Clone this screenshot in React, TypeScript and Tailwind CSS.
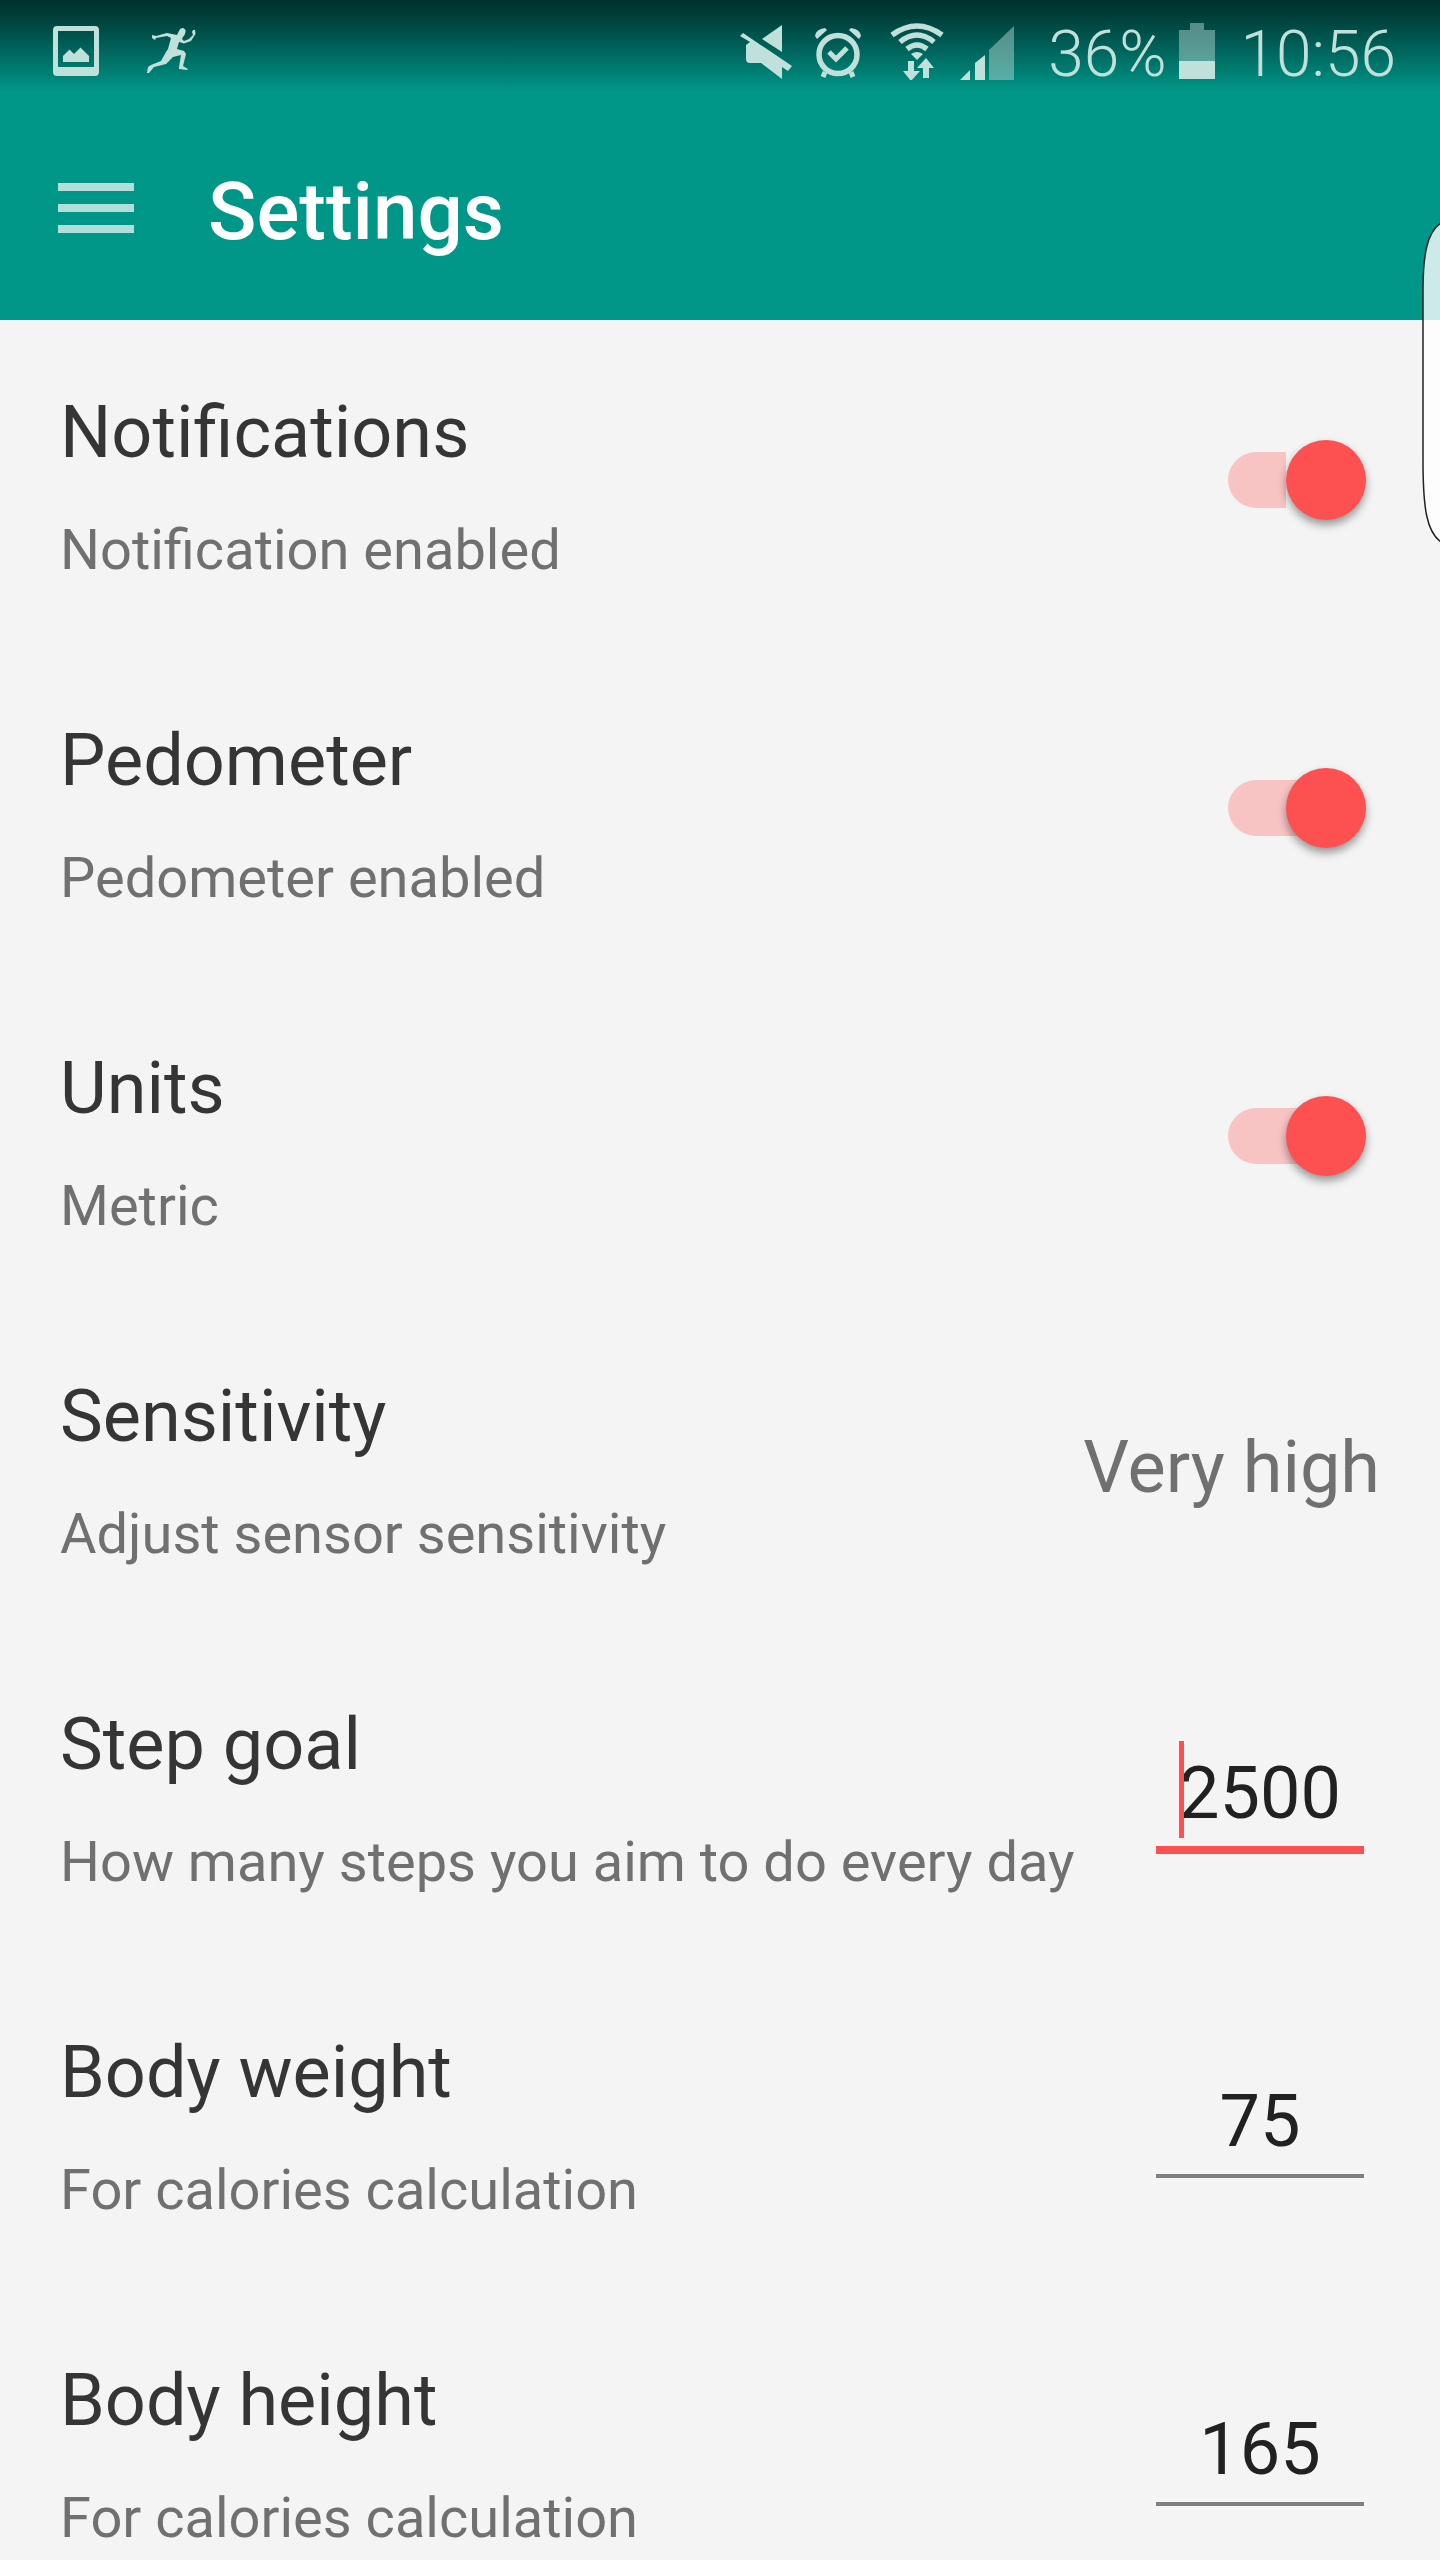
import { useState } from "react";

interface SettingRowProps {
  id: string;
  title: string;
  summary: string;
  children: React.ReactNode;
}

function SettingRow({ id, title, summary, children }: SettingRowProps) {
  return (
    <div className="flex min-h-[320px] items-center justify-between px-[60px]">
      <div className="pt-px">
        <label htmlFor={id} className="block text-[72px] leading-[114px] text-[#353535]">
          {title}
        </label>
        <p id={`${id}-summary`} className="mt-[25px] text-[56px] leading-[70px] whitespace-nowrap text-[#707070]">
          {summary}
        </p>
      </div>
      {children}
    </div>
  );
}

interface ToggleProps {
  id: string;
  shortTrack?: boolean;
}

function Toggle({ id, shortTrack }: ToggleProps) {
  const [on, setOn] = useState(true);

  return (
    <span className="relative mr-3.5 flex h-20 w-[138px] items-center">
      <input
        id={id}
        type="checkbox"
        role="switch"
        checked={on}
        onChange={(e) => setOn(e.target.checked)}
        aria-describedby={`${id}-summary`}
        className={
          shortTrack
            ? "peer h-14 w-[58px] appearance-none rounded-l-full bg-[#d0d0d0] checked:bg-[#f7c3c3]"
            : "peer h-14 w-full appearance-none rounded-full bg-[#d0d0d0] checked:bg-[#f7c3c3]"
        }
      />
      <span className="pointer-events-none absolute top-0 left-0 size-20 rounded-full bg-[#fafafa] shadow-[0_5px_9px_rgba(0,0,0,0.38)] peer-checked:right-0 peer-checked:left-auto peer-checked:bg-[#fd5050]" />
    </span>
  );
}

interface NumberFieldProps {
  id: string;
  initial: string;
  active?: boolean;
}

function NumberField({ id, initial, active }: NumberFieldProps) {
  const [value, setValue] = useState(initial);

  return (
    <span className="relative mr-4 flex w-[208px] shrink-0 flex-col pt-1.5">
      <input
        id={id}
        type="text"
        inputMode="numeric"
        value={value}
        onChange={(e) => setValue(e.target.value)}
        aria-describedby={`${id}-summary`}
        className="h-[116px] w-full bg-transparent text-center text-[72px] leading-[84px] text-[#212121] caret-[#fd5050] outline-none"
      />
      {active ? (
        <>
          <span className="absolute top-3 left-[23px] h-[97px] w-[5px] bg-[#fd5050]" />
          <span className="-mt-[5px] mb-px h-2 bg-[#fd5050]" />
        </>
      ) : (
        <span className="-mt-[5px] mb-[5px] h-1 bg-[#808080]" />
      )}
    </span>
  );
}

function StatusBar() {
  return (
    <div className="flex h-24 items-center justify-between bg-linear-to-b from-[#00332f] from-5% to-[#009688] to-95% pt-1.5 pr-11 pl-[52px] text-[#c0e0dc]">
      <div className="flex items-center gap-[46px]">
        <svg className="h-[52px] w-[48px]" viewBox="0 0 48 52" fill="currentColor">
          <path fillRule="evenodd" d="M5 1H43Q47 1 47 5V47Q47 51 43 51H5Q1 51 1 47V5Q1 1 5 1ZM6 6V42H42V6Z" />
          <path d="M11 37V31L17.500 24.500L22 29L28.500 22.500L37 31V37Z" />
        </svg>
        <svg className="h-[48px] w-[52px]" viewBox="0 0 52 48" fill="currentColor">
          <path d="M33 4Q34 1 37 1Q40 2 39.500 5Q39 8 37 10L36 12L38 14L43 12L47 8L46 5Q47 2 49 3L49.500 7L45 14L38 16.500L33 15L31 22L38 24L40 27L37 39L42 42L41 43L33 42V40L35 28L27 30L20 37L8 40L3 46L1 46L2 40L5 38L15 34L20 25L22 22L25 11L21 9L10 11L9 13L6 11L6 8L10 9L21 6L31 8Z" />
        </svg>
      </div>
      <div className="flex items-center">
        <svg className="h-[58px] w-[274px]" viewBox="0 0 274 58" fill="currentColor">
          <path d="M42 3V30L22 17Z" />
          <path d="M3 11L52 44L48 49L42 45V57L21 41H10Q6 41 6 37V23L10 20L0 14Z" />
          <g fill="none" stroke="currentColor" strokeWidth="5.500">
            <circle cx="98" cy="32.500" r="19" />
            <path d="M89 30L96 37L107 26" strokeWidth="5" />
            <path d="M85 50L83 55M111 50L113 55" strokeWidth="5" />
            <path d="M152 13Q177-5 202 13" />
            <path d="M160 20Q177 6 194 20" />
            <path d="M167 27Q177 19 187 27" />
          </g>
          <path d="M75 14Q76 7 85 6L87 8L77 17ZM121 14Q120 7 111 6L109 8L119 17Z" />
          <path d="M171 32Q177 28 183 32L177 38Z" />
          <path d="M168 39H174V49H180L171 59L163 49H168ZM183 56V46H177L186 36L194 46H189V56Z" />
          <path d="M220 58L230 48V58ZM235 58V41L245 33V58Z" />
          <path d="M249 58V28L274 4V58Z" opacity=".45" />
        </svg>
        <span className="ml-[34px] pt-2 text-[64px] leading-[76px] font-[360]">36%</span>
        <svg className="ml-3 h-[56px] w-[36px]" viewBox="0 0 36 56" fill="currentColor">
          <path d="M11 0H25V7H36V38H0V7H11Z" opacity=".45" />
          <path d="M0 38H36V56H0Z" />
        </svg>
        <span className="ml-[26px] pt-2 text-[64px] leading-[76px] font-[360]">10:56</span>
      </div>
    </div>
  );
}

export default function App() {
  return (
    <div className="relative min-h-screen overflow-x-hidden bg-[#f4f4f4] font-[Roboto,sans-serif]">
      <header className="bg-[#009688]">
        <StatusBar />
        <div className="flex h-56 items-center gap-[74px] px-[58px]">
          <button type="button" aria-label="Open menu" className="flex w-[76px] flex-col gap-[13px]">
            <span className="h-2 bg-[#b2dfdb]" />
            <span className="h-2 bg-[#b2dfdb]" />
            <span className="h-2 bg-[#b2dfdb]" />
          </button>
          <h1 className="pt-2 text-[80px] leading-[94px] font-medium text-white">Settings</h1>
        </div>
      </header>

      <main className="flex flex-col gap-2">
        <SettingRow id="notifications" title="Notifications" summary="Notification enabled">
          <Toggle id="notifications" shortTrack />
        </SettingRow>
        <SettingRow id="pedometer" title="Pedometer" summary="Pedometer enabled">
          <Toggle id="pedometer" />
        </SettingRow>
        <SettingRow id="units" title="Units" summary="Metric">
          <Toggle id="units" />
        </SettingRow>
        <SettingRow id="sensitivity" title="Sensitivity" summary="Adjust sensor sensitivity">
          <select
            id="sensitivity"
            defaultValue="Very high"
            aria-describedby="sensitivity-summary"
            className="appearance-none bg-transparent pt-2 text-right text-[72px] leading-[84px] text-[#707070]"
          >
            <option>Low</option>
            <option>Medium</option>
            <option>High</option>
            <option>Very high</option>
          </select>
        </SettingRow>
        <SettingRow id="step-goal" title="Step goal" summary="How many steps you aim to do every day">
          <NumberField id="step-goal" initial="2500" active />
        </SettingRow>
        <SettingRow id="weight" title="Body weight" summary="For calories calculation">
          <NumberField id="weight" initial="75" />
        </SettingRow>
        <SettingRow id="height" title="Body height" summary="For calories calculation">
          <NumberField id="height" initial="165" />
        </SettingRow>
      </main>

      {/* edge panel handle */}
      <svg className="absolute top-[220px] right-0 h-[324px] w-[18px]" viewBox="0 0 18 324">
        <path
          d="M19 3C5 12 1 35 1 70V240C1 290 5 312 19 322"
          fill="#fff"
          fillOpacity=".8"
          stroke="#222"
          strokeWidth="1.500"
        />
      </svg>
    </div>
  );
}
